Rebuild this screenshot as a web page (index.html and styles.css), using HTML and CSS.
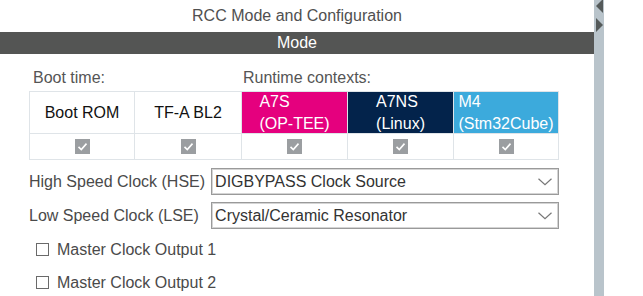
FILE: index.html
```html
<!DOCTYPE html>
<html lang="en">
<head>
<meta charset="utf-8">
<title>RCC Mode and Configuration</title>
<link rel="stylesheet" href="styles.css">
</head>
<body>
<div class="app">
  <main class="panel">
    <div class="title">RCC Mode and Configuration</div>
    <div class="section-bar">Mode</div>
    <div class="content">
      <div class="ctx-labels">
        <span class="lbl lbl-boot">Boot time:</span>
        <span class="lbl lbl-runtime">Runtime contexts:</span>
      </div>
      <div class="ctx-grid">
        <div class="cell head">Boot ROM</div>
        <div class="cell head">TF-A BL2</div>
        <div class="cell head ctx a7s"><span class="ctx-name">A7S<br>(OP-TEE)</span></div>
        <div class="cell head ctx a7ns"><span class="ctx-name">A7NS<br>(Linux)</span></div>
        <div class="cell head ctx m4"><span class="ctx-name">M4<br>(Stm32Cube)</span></div>
        <div class="cell chk"><span class="tick"><svg viewBox="0 0 15 15" width="15" height="15"><path d="M3.5 7.8 L6.3 10.5 L11.5 4.6" fill="none" stroke="#fff" stroke-width="1.6"/></svg></span></div>
        <div class="cell chk"><span class="tick"><svg viewBox="0 0 15 15" width="15" height="15"><path d="M3.5 7.8 L6.3 10.5 L11.5 4.6" fill="none" stroke="#fff" stroke-width="1.6"/></svg></span></div>
        <div class="cell chk"><span class="tick"><svg viewBox="0 0 15 15" width="15" height="15"><path d="M3.5 7.8 L6.3 10.5 L11.5 4.6" fill="none" stroke="#fff" stroke-width="1.6"/></svg></span></div>
        <div class="cell chk"><span class="tick"><svg viewBox="0 0 15 15" width="15" height="15"><path d="M3.5 7.8 L6.3 10.5 L11.5 4.6" fill="none" stroke="#fff" stroke-width="1.6"/></svg></span></div>
        <div class="cell chk"><span class="tick"><svg viewBox="0 0 15 15" width="15" height="15"><path d="M3.5 7.8 L6.3 10.5 L11.5 4.6" fill="none" stroke="#fff" stroke-width="1.6"/></svg></span></div>
      </div>
      <div class="clocks">
        <span class="clk-label">High Speed Clock (HSE)</span>
        <div class="select"><span class="sel-text">DIGBYPASS Clock Source</span><svg class="chev" viewBox="0 0 14 8" width="14" height="8"><path d="M0.5 0.8 L7 6.8 L13.5 0.8" fill="none" stroke="#777" stroke-width="1.2"/></svg></div>
        <span class="clk-label">Low Speed Clock (LSE)</span>
        <div class="select"><span class="sel-text">Crystal/Ceramic Resonator</span><svg class="chev" viewBox="0 0 14 8" width="14" height="8"><path d="M0.5 0.8 L7 6.8 L13.5 0.8" fill="none" stroke="#777" stroke-width="1.2"/></svg></div>
      </div>
      <div class="opts">
        <div class="opt"><span class="box"></span><span>Master Clock Output 1</span></div>
        <div class="opt"><span class="box"></span><span>Master Clock Output 2</span></div>
      </div>
    </div>
  </main>
  <div class="splitter">
    <svg class="arrows" viewBox="0 0 10 34" width="10" height="34">
      <path d="M9 -1 L2 6 L9 13 Z" fill="#555a5a"/>
      <path d="M2 18 L9 25 L2 32 Z" fill="#555a5a"/>
    </svg>
  </div>
  <div class="rest"></div>
</div>
</body>
</html>
```
FILE: styles.css
```css
html, body {
  margin: 0;
  padding: 0;
  background: #fff;
}
body {
  font-family: "Liberation Sans", Arial, sans-serif;
  font-size: 16px;
  color: #4a4a4a;
}
.app {
  display: flex;
  height: 296px;
  overflow: hidden;
}
.panel {
  width: 594px;
  flex: none;
}
.title {
  height: 32px;
  line-height: 31px;
  text-align: center;
  color: #505050;
}
.section-bar {
  height: 22px;
  line-height: 22px;
  background: #545554;
  color: #fff;
  text-align: center;
}
.content {
  padding-left: 29px;
}
.ctx-labels {
  display: grid;
  grid-template-columns: 212px 318px;
  width: 530px;
  padding-top: 15px;
  height: 18px;
  line-height: 18px;
  margin-bottom: 4px;
  color: #555;
}
.lbl-boot { padding-left: 4px; }
.lbl-runtime { padding-left: 2px; }
.ctx-grid {
  display: grid;
  grid-template-columns: 105px 107px 106px 106px 105px;
  grid-template-rows: 42px 26px;
  width: 530px;
  box-sizing: border-box;
  border-top: 1px solid #dfe4e8;
  border-left: 1px solid #dfe4e8;
}
.cell {
  box-sizing: border-box;
  border-right: 1px solid #dfe4e8;
  border-bottom: 1px solid #dfe4e8;
  display: flex;
  align-items: center;
  justify-content: center;
  overflow: hidden;
}
.head {
  color: #111;
}
.ctx {
  color: #fff;
}
.ctx-name {
  display: inline-block;
  text-align: left;
  line-height: 22px;
  white-space: nowrap;
}
.a7s { background: #e5007e; }
.a7ns { background: #03234b; }
.m4 { background: #3caadc; }
.tick {
  width: 15px;
  height: 15px;
  background: #9b9ea1;
  display: block;
}
.tick svg { display: block; }
.clocks {
  display: grid;
  grid-template-columns: auto 1fr;
  column-gap: 6px;
  row-gap: 7px;
  width: 530px;
  margin-top: 8px;
  align-items: center;
}
.clk-label {
  color: #4a4a4a;
  white-space: nowrap;
}
.select {
  height: 27px;
  box-sizing: border-box;
  border: 1px solid #9a9a9a;
  box-shadow: inset 0 0 0 1px #d4d4d4;
  display: flex;
  align-items: center;
  justify-content: space-between;
  padding-left: 3px;
  padding-right: 6px;
  color: #333;
}
.chev { display: block; }
.opts {
  margin-top: 4px;
}
.opt {
  height: 33px;
  display: flex;
  align-items: center;
  padding-left: 7px;
  gap: 8px;
  color: #4a4a4a;
}
.box {
  width: 13px;
  height: 13px;
  box-sizing: border-box;
  border: 1px solid #6a6a6a;
  background: #fff;
  display: block;
}
.splitter {
  width: 10px;
  flex: none;
  background: #b9c4cb;
}
.arrows { display: block; }
.rest {
  flex: 1;
  background: #fff;
}
```
